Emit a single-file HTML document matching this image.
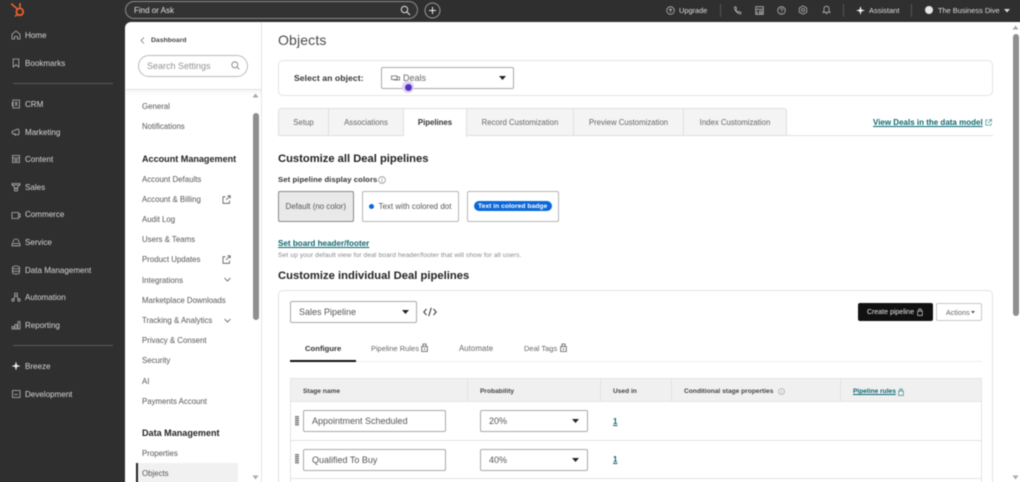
<!DOCTYPE html>
<html><head><meta charset="utf-8"><style>
html,body{margin:0;padding:0;width:1020px;height:482px;overflow:hidden;background:#fff}
body{position:relative;font-family:"Liberation Sans",sans-serif;color:#444}
#c{position:absolute;left:0;top:0;width:1020px;height:482px;overflow:hidden}
#p{position:absolute;left:0;top:0;width:1020px;height:482px;filter:blur(.4px)}
.a{position:absolute;box-sizing:border-box}
.t{position:absolute;white-space:nowrap;line-height:12px;margin-top:-6px;font-size:8.5px}
.n{color:#d6d6d6;font-size:8.05px;left:25px;margin-top:-5px}
.s{color:#555;font-size:7.85px;left:142px;margin-top:-5px}
.h{color:#222;font-weight:bold;font-size:9.07px;left:142px}
.b{font-weight:bold}
.l{color:#0b666c;font-weight:bold;text-decoration:underline}
.tab{position:absolute;top:108px;height:28px;background:#f4f4f4;border:1px solid #dfdfdf;border-left:0;box-sizing:border-box;text-align:center;line-height:28px;font-size:7.8px;color:#666;white-space:nowrap}
.box{position:absolute;box-sizing:border-box;background:#fff;border:1px solid #a9a9a9;border-radius:2px}
.ln{position:absolute;background:#e3e3e3}
svg{position:absolute;overflow:visible}
.i{fill:none;stroke:#b4b4b4}
.g{fill:none;stroke:#777;stroke-width:.8}
.th{font-size:6.6px;color:#444;top:392px}
</style></head><body><div id="c"><div id="p">

<div class="a" style="left:-20px;top:-20px;width:1060px;height:42px;background:#2f2f2f"></div>
<div class="a" style="left:-20px;top:-20px;width:145px;height:530px;background:#2f2f2f"></div>
<div class="a" style="left:125px;top:22px;width:20px;height:20px;background:#2f2f2f"></div>
<div class="a" style="left:125px;top:22px;width:137px;height:480px;background:#fff;border-top-left-radius:6px;border-right:1px solid #e4e4e4"></div>

<!-- logo -->
<svg style="left:10px;top:2px" width="16" height="16" viewBox="0 0 16 16"><circle cx="9.8" cy="9.8" r="3.4" fill="none" stroke="#e8622c" stroke-width="1.8"/><path d="M2 2.5L7.5 7M10 6V2.5M7.3 12.3L5 14.5" stroke="#e8622c" stroke-width="1.5" fill="none"/><circle cx="10" cy="2" r="1" fill="#e8622c"/><circle cx="2" cy="2.3" r="1" fill="#e8622c"/></svg>

<!-- search -->
<div class="a" style="left:125px;top:1px;width:293px;height:18px;border:1px solid #8b8b8b;border-radius:9px;background:#333"></div>
<span class="t" style="left:134px;top:10.6px;color:#e0e0e0;font-size:8px">Find or Ask</span>
<svg style="left:400px;top:5px" width="11" height="11" viewBox="0 0 11 11"><circle cx="4.5" cy="4.5" r="3.2" fill="none" stroke="#ddd" stroke-width="1"/><path d="M7 7L10 10" stroke="#ddd" stroke-width="1.1"/></svg>
<svg style="left:424px;top:2px" width="17" height="17" viewBox="0 0 17 17"><circle cx="8.5" cy="8.5" r="7.5" fill="none" stroke="#999"/><path d="M8.5 5v7M5 8.5h7" stroke="#eee" stroke-width="1"/></svg>

<!-- top right -->
<svg style="left:666px;top:6px" width="9" height="9" viewBox="0 0 9 9"><circle cx="4.5" cy="4.5" r="3.8" class="i" stroke-width=".8"/><path d="M4.5 6.5V3M3 4.3L4.5 2.8 6 4.3" class="i" stroke-width=".8"/></svg>
<span class="t" style="left:679px;top:10.5px;color:#ddd;font-size:7.4px">Upgrade</span>
<div class="a" style="left:720px;top:4px;width:1px;height:13px;background:#555"></div>
<svg style="left:733px;top:6px" width="9" height="9" viewBox="0 0 9 9"><path d="M1.5 1C1 3.5 4 7.5 7.5 8L8 6.5 6 5.5 5 6.2C4 5.7 3 4.5 2.8 3.5L3.6 2.7 2.9 .8Z" class="i" stroke-width=".8"/></svg>
<svg style="left:755px;top:6px" width="9" height="9" viewBox="0 0 9 9"><path d="M.7 .7h7.6v7.6H.7ZM.7 3.3h7.6M2 5v3.2M4.5 5.2h2.5v2h-2.5Z" class="i" stroke-width=".8"/></svg>
<svg style="left:777px;top:6px" width="9" height="9" viewBox="0 0 9 9"><circle cx="4.5" cy="4.5" r="3.8" class="i" stroke-width=".8"/><path d="M3.2 3.5C3.3 2.2 5.8 2.2 5.8 3.5 5.8 4.4 4.5 4.4 4.5 5.5M4.5 6.2v.8" class="i" stroke-width=".7"/></svg>
<svg style="left:798px;top:5px" width="10" height="10" viewBox="0 0 10 10"><path d="M5 .8L8.7 3v4.2L5 9.2 1.3 7.2V3Z" class="i" stroke-width=".8"/><circle cx="5" cy="5" r="1.5" class="i" stroke-width=".8"/></svg>
<svg style="left:822px;top:5px" width="9" height="10" viewBox="0 0 9 10"><path d="M1 7.3h7L7 6V3.5C7 .6 2 .6 2 3.5V6ZM3.5 8.6h2" class="i" stroke-width=".8"/></svg>
<div class="a" style="left:843px;top:4px;width:1px;height:13px;background:#555"></div>
<svg style="left:856px;top:6px" width="9" height="9" viewBox="0 0 9 9"><path d="M4.5 0L5.5 3.5 9 4.5 5.5 5.5 4.5 9 3.5 5.5 0 4.5 3.5 3.5Z" fill="#f2f2f2"/></svg>
<span class="t" style="left:869px;top:10.5px;color:#ddd;font-size:7.5px">Assistant</span>
<div class="a" style="left:911px;top:4px;width:1px;height:13px;background:#555"></div>
<div class="a" style="left:925px;top:6px;width:8px;height:8px;border-radius:50%;background:#e6e6e6"></div>
<span class="t" style="left:938px;top:10.5px;color:#ddd;font-size:7.4px">The Business Dive</span>
<svg style="left:1004px;top:9px" width="6" height="4"><path d="M0 0h6L3 3.5Z" fill="#ddd"/></svg>

<!-- sidebar -->
<svg style="left:11px;top:30px" width="10" height="10" viewBox="0 0 10 10"><path d="M1 9V4.3L5 1l4 3.3V9H6.5V6.5h-3V9Z" class="i" stroke-width=".8"/></svg>
<span class="t n" style="top:35px">Home</span>
<svg style="left:11px;top:58px" width="10" height="10" viewBox="0 0 10 10"><path d="M2.2 1h5.600v8L5 6.800 2.200 9Z" class="i" stroke-width=".8"/></svg>
<span class="t n" style="top:63px">Bookmarks</span>
<div class="a" style="left:13px;top:83px;width:100px;height:1px;background:#5a5a5a"></div>
<svg style="left:11px;top:99px" width="10" height="10" viewBox="0 0 10 10"><path d="M2 1h6.5v8H2ZM1.3 3v4" class="i" stroke-width=".8"/><circle cx="5.2" cy="4" r="1" class="i" stroke-width=".7"/><path d="M3.6 7c.5-1.400 2.700-1.400 3.200 0" class="i" stroke-width=".7"/></svg>
<span class="t n" style="top:104px">CRM</span>
<svg style="left:11px;top:127px" width="10" height="10" viewBox="0 0 10 10"><path d="M1 4.500L7 2c1.500 1 1.500 5 0 6L3.500 6.800H1.500ZM3.500 6.800L4.500 8.800" class="i" stroke-width=".8"/></svg>
<span class="t n" style="top:132px">Marketing</span>
<svg style="left:11px;top:154px" width="10" height="10" viewBox="0 0 10 10"><path d="M1.500 1.500h7v7h-7ZM1.500 4h7M3 5.500h4M3 7h4" class="i" stroke-width=".8"/></svg>
<span class="t n" style="top:159px">Content</span>
<svg style="left:11px;top:182px" width="10" height="10" viewBox="0 0 10 10"><path d="M1 1.500h8v1.500H1ZM1.800 3l1.700 3h3l1.700-3M3.500 6.500h3V8.800h-3Z" class="i" stroke-width=".8"/></svg>
<span class="t n" style="top:187px">Sales</span>
<svg style="left:11px;top:210px" width="10" height="10" viewBox="0 0 10 10"><path d="M1 2.500h6.500v6H1ZM7.500 4h1.700v3H7.500" class="i" stroke-width=".8"/></svg>
<span class="t n" style="top:214px">Commerce</span>
<svg style="left:11px;top:237px" width="10" height="10" viewBox="0 0 10 10"><path d="M2 5.500C2 1 8 1 8 5.500M1 6.500h8v2.300H1Z" class="i" stroke-width=".8"/></svg>
<span class="t n" style="top:242px">Service</span>
<svg style="left:11px;top:265px" width="10" height="10" viewBox="0 0 10 10"><ellipse cx="5" cy="2.500" rx="3.500" ry="1.500" class="i" stroke-width=".8"/><path d="M1.500 2.500v5c0 2 7 2 7 0v-5M1.500 5c0 2 7 2 7 0" class="i" stroke-width=".8"/></svg>
<span class="t n" style="top:270px">Data Management</span>
<svg style="left:11px;top:292px" width="10" height="10" viewBox="0 0 10 10"><circle cx="5" cy="2.500" r="1.500" class="i" stroke-width=".8"/><circle cx="2" cy="8" r="1.200" class="i" stroke-width=".8"/><circle cx="8" cy="8" r="1.200" class="i" stroke-width=".8"/><path d="M4.200 4L2.600 6.800M5.800 4L7.400 6.800" class="i" stroke-width=".8"/></svg>
<span class="t n" style="top:297px">Automation</span>
<svg style="left:11px;top:320px" width="10" height="10" viewBox="0 0 10 10"><path d="M1 6.500h2v2.500H1ZM4 4.500h2V9H4ZM7 1.500h2V9H7Z" class="i" stroke-width=".8"/></svg>
<span class="t n" style="top:325px">Reporting</span>
<div class="a" style="left:13px;top:345px;width:100px;height:1px;background:#5a5a5a"></div>
<svg style="left:11px;top:361px" width="10" height="10" viewBox="0 0 10 10"><path d="M5 .5L6 4 9.500 5 6 6 5 9.500 4 6 .5 5 4 4Z" fill="#f0f0f0"/></svg>
<span class="t n" style="top:366px">Breeze</span>
<svg style="left:11px;top:389px" width="10" height="10" viewBox="0 0 10 10"><path d="M1.500 1.500h7.500v7H1.500ZM3 5.500h4" class="i" stroke-width=".8"/></svg>
<span class="t n" style="top:394px">Development</span>

<!-- settings header -->
<svg style="left:140px;top:37px" width="5" height="7" viewBox="0 0 5 7"><path d="M4 .5L1 3.500 4 6.500" class="g"/></svg>
<span class="t b" style="left:151px;top:40.5px;font-size:6.8px;color:#444">Dashboard</span>
<div class="a" style="left:138px;top:55px;width:110px;height:22px;border:1px solid #bbb;border-radius:11px;background:#fff"></div>
<span class="t" style="left:147px;top:66px;font-size:9px;color:#929292">Search Settings</span>
<svg style="left:231px;top:61px" width="9" height="9" viewBox="0 0 9 9"><circle cx="3.800" cy="3.800" r="3" class="g"/><path d="M6 6L8.300 8.300" class="g"/></svg>
<div class="a" style="left:126px;top:89px;width:135px;height:1px;background:#e2e2e2"></div>
<div class="a" style="left:126px;top:90px;width:135px;height:6px;background:linear-gradient(#f7f7f7,#fff)"></div>

<svg style="left:252px;top:93px" width="7" height="5"><path d="M.5 4.500h6L3.500 .5Z" fill="#a8a8a8"/></svg>
<div class="a" style="left:253px;top:113px;width:6px;height:207px;border-radius:3px;background:#8f8f8f"></div>
<svg style="left:252px;top:475px" width="7" height="5"><path d="M.5 .5h6L3.500 4.500Z" fill="#a8a8a8"/></svg>

<span class="t s" style="top:106px">General</span>
<span class="t s" style="top:126px">Notifications</span>
<span class="t h" style="top:159px">Account Management</span>
<span class="t s" style="top:178.5px">Account Defaults</span>
<span class="t s" style="top:199px">Account &amp; Billing</span>
<svg style="left:222px;top:195px" width="9" height="9" viewBox="0 0 9 9"><path d="M3.500 1.800H1v6.500h6.500V5.500M4 5L8 1M5.500 .8H8.200V3.500" fill="none" stroke="#555" stroke-width=".8"/></svg>
<span class="t s" style="top:219px">Audit Log</span>
<span class="t s" style="top:239px">Users &amp; Teams</span>
<span class="t s" style="top:259px">Product Updates</span>
<svg style="left:222px;top:255px" width="9" height="9" viewBox="0 0 9 9"><path d="M3.500 1.800H1v6.500h6.500V5.500M4 5L8 1M5.500 .8H8.200V3.500" fill="none" stroke="#555" stroke-width=".8"/></svg>
<span class="t s" style="top:279.6px">Integrations</span>
<svg style="left:224px;top:277px" width="7" height="5" viewBox="0 0 7 5"><path d="M.5 1L3.500 4 6.500 1" fill="none" stroke="#555" stroke-width=".8"/></svg>
<span class="t s" style="top:300px">Marketplace Downloads</span>
<span class="t s" style="top:320px">Tracking &amp; Analytics</span>
<svg style="left:224px;top:317.5px" width="7" height="5" viewBox="0 0 7 5"><path d="M.5 1L3.500 4 6.500 1" fill="none" stroke="#555" stroke-width=".8"/></svg>
<span class="t s" style="top:340px">Privacy &amp; Consent</span>
<span class="t s" style="top:360px">Security</span>
<span class="t s" style="top:380.6px">AI</span>
<span class="t s" style="top:400.6px">Payments Account</span>
<span class="t h" style="top:433px">Data Management</span>
<span class="t s" style="top:453px">Properties</span>
<div class="a" style="left:137px;top:463px;width:101px;height:39px;background:#f1f1f1"></div>
<div class="a" style="left:136px;top:463px;width:1.5px;height:39px;background:#222"></div>
<span class="t s" style="top:473px">Objects</span>

<!-- main -->
<span class="t" style="left:278px;top:40px;font-size:14px;line-height:18px;margin-top:-9px;color:#4a4a4a;letter-spacing:.15px">Objects</span>
<div class="a" style="left:278px;top:60px;width:715px;height:36px;border:1px solid #e4e4e4;border-radius:5px"></div>
<span class="t b" style="left:294px;top:78px;font-size:8.6px;color:#333;letter-spacing:.08px">Select an object:</span>
<div class="box" style="left:381px;top:67px;width:133px;height:22px"></div>
<svg style="left:391px;top:75px" width="9" height="6" viewBox="0 0 9 6"><path d="M.5 1h5.500v3.500H.5ZM6 2h2.500v3H3v-.5" fill="none" stroke="#666" stroke-width=".8"/></svg>
<span class="t" style="left:403px;top:78px;font-size:9px;color:#666">Deals</span>
<svg style="left:499px;top:76px" width="7" height="4"><path d="M0 0h7L3.500 4Z" fill="#222"/></svg>
<div class="a" style="left:402px;top:81px;width:12px;height:12px;border-radius:50%;background:#dcd5f5"></div>
<div class="a" style="left:404.5px;top:83.5px;width:7px;height:7px;border-radius:50%;background:#5b2fc4"></div>

<div class="ln" style="left:278px;top:135px;width:715px;height:1px;background:#e0e0e0"></div>
<div class="tab" style="left:278px;width:51px;border-left:1px solid #dfdfdf;border-top-left-radius:3px">Setup</div>
<div class="tab" style="left:329px;width:75px">Associations</div>
<div class="tab" style="left:404px;width:63px;background:#fff;border-bottom:0;color:#333;font-weight:bold;height:29px">Pipelines</div>
<div class="tab" style="left:467px;width:107px">Record Customization</div>
<div class="tab" style="left:574px;width:110px">Preview Customization</div>
<div class="tab" style="left:684px;width:103px;border-top-right-radius:3px">Index Customization</div>
<span class="t l" style="left:873px;top:122.5px;font-size:8px">View Deals in the data model</span>
<svg style="left:985px;top:119px" width="7" height="7" viewBox="0 0 7 7"><path d="M3 1H.8v5.200H6V4M3 4L6.200 .8M4.300 .5h2.200v2.200" fill="none" stroke="#3b8a8f" stroke-width=".7"/></svg>

<span class="t b" style="left:278px;top:158.5px;font-size:11.2px;line-height:14px;margin-top:-7px;color:#222">Customize all Deal pipelines</span>
<span class="t b" style="left:278px;top:180px;font-size:7.7px;color:#333;letter-spacing:.09px">Set pipeline display colors</span>
<svg style="left:378px;top:176px" width="8" height="8" viewBox="0 0 8 8"><circle cx="4" cy="4" r="3.400" fill="none" stroke="#888" stroke-width=".7"/><path d="M4 3.300v2.700M4 2v.7" stroke="#888" stroke-width=".7"/></svg>

<div class="box" style="left:278px;top:191px;width:76px;height:31px;background:#e9e9e9;border-color:#8a8a8a"></div>
<span class="t" style="left:285.5px;top:206.8px;font-size:7.9px;color:#555">Default (no color)</span>
<div class="box" style="left:362px;top:191px;width:97px;height:31px;border-color:#b5b5b5"></div>
<div class="a" style="left:369px;top:203.5px;width:5px;height:5px;border-radius:50%;background:#0b68d8"></div>
<span class="t" style="left:378.5px;top:206.8px;font-size:7.9px;color:#555;letter-spacing:.05px">Text with colored dot</span>
<div class="box" style="left:467px;top:191px;width:92px;height:31px;border-color:#b5b5b5"></div>
<div class="a" style="left:474px;top:201px;width:78px;height:10px;border-radius:5px;background:#0b68d8"></div>
<span class="t b" style="left:478px;top:207px;font-size:6.7px;color:#fff;letter-spacing:.03px">Text in colored badge</span>

<span class="t l" style="left:278px;top:243.5px;font-size:8.1px">Set board header/footer</span>
<span class="t" style="left:278px;top:255.8px;font-size:6.7px;color:#888;letter-spacing:.09px">Set up your default view for deal board header/footer that will show for all users.</span>
<span class="t b" style="left:278px;top:275.5px;font-size:11.2px;line-height:14px;margin-top:-7px;color:#222;letter-spacing:.03px">Customize individual Deal pipelines</span>

<div class="a" style="left:278px;top:290px;width:715px;height:230px;border:1px solid #e2e2e2;border-radius:5px"></div>
<div class="box" style="left:290px;top:301px;width:127px;height:22px"></div>
<span class="t" style="left:299px;top:312px;font-size:9px;color:#555">Sales Pipeline</span>
<svg style="left:402px;top:310px" width="7" height="4"><path d="M0 0h7L3.500 4Z" fill="#222"/></svg>
<svg style="left:423px;top:307px" width="14" height="10" viewBox="0 0 14 10"><path d="M3.500 2L.8 5l2.700 3M10.500 2l2.700 3-2.700 3M8.300 .8L5.700 9.200" fill="none" stroke="#333" stroke-width="1"/></svg>

<div class="a" style="left:858px;top:303px;width:75px;height:18px;border-radius:2px;background:#111"></div>
<span class="t" style="left:867px;top:313px;font-size:7px;color:#e8e8e8">Create pipeline</span>
<svg style="left:917px;top:308px" width="6" height="8" viewBox="0 0 6 8"><path d="M.7 3h4.600v4.500H.7ZM1.800 3V1h2.400v2" fill="none" stroke="#ccc" stroke-width=".7"/></svg>
<div class="a" style="left:936px;top:303px;width:46px;height:18px;border:1px solid #c8c8c8;border-radius:2px"></div>
<span class="t" style="left:946px;top:313px;font-size:7.2px;color:#666">Actions</span>
<svg style="left:971px;top:311px" width="4" height="3"><path d="M0 0h4L2 2.500Z" fill="#555"/></svg>

<span class="t b" style="left:305px;top:348.5px;font-size:7.7px;color:#333">Configure</span>
<span class="t" style="left:371px;top:348.5px;font-size:7.5px;color:#666">Pipeline Rules</span>
<svg style="left:421px;top:343px" width="7" height="9" viewBox="0 0 7 9"><path d="M.7 3.500h5.600v5H.7ZM2 3.500V1h3v2.500M3.500 5v2" fill="none" stroke="#555" stroke-width=".8"/></svg>
<span class="t" style="left:459px;top:348.5px;font-size:7.8px;color:#666;letter-spacing:.1px">Automate</span>
<span class="t" style="left:524px;top:348.5px;font-size:7.5px;color:#666">Deal Tags</span>
<svg style="left:560px;top:343px" width="7" height="9" viewBox="0 0 7 9"><path d="M.7 3.500h5.600v5H.7ZM2 3.500V1h3v2.500M3.500 5v2" fill="none" stroke="#555" stroke-width=".8"/></svg>
<div class="ln" style="left:290px;top:361px;width:692px;height:1px;background:#ececec"></div>
<div class="a" style="left:290px;top:360px;width:66px;height:2px;background:#111"></div>

<div class="a" style="left:290px;top:378px;width:692px;height:24px;background:#f0f0f0;border:1px solid #e4e4e4"></div>
<div class="ln" style="left:467px;top:378px;width:1px;height:24px"></div>
<div class="ln" style="left:600px;top:378px;width:1px;height:24px"></div>
<div class="ln" style="left:671px;top:378px;width:1px;height:24px"></div>
<div class="ln" style="left:840px;top:378px;width:1px;height:24px"></div>
<div class="ln" style="left:290px;top:402px;width:1px;height:100px"></div>
<div class="ln" style="left:981px;top:402px;width:1px;height:100px"></div>
<div class="ln" style="left:290px;top:440px;width:692px;height:1px"></div>
<div class="ln" style="left:290px;top:478px;width:692px;height:1px"></div>
<span class="t b th" style="left:303px">Stage name</span>
<span class="t b th" style="left:480px">Probability</span>
<span class="t b th" style="left:613px">Used in</span>
<span class="t b th" style="left:684px">Conditional stage properties</span>
<svg style="left:778px;top:387.5px" width="7" height="7" viewBox="0 0 7 7"><circle cx="3.500" cy="3.500" r="3" fill="none" stroke="#999" stroke-width=".6"/><path d="M3.500 3v2M3.500 1.700v.6" stroke="#999" stroke-width=".6"/></svg>
<span class="t l th" style="left:853px;color:#0b666c">Pipeline rules</span>
<svg style="left:898px;top:387.5px" width="6" height="8" viewBox="0 0 6 8"><path d="M.7 3h4.600v4.500H.7ZM1.800 3V1h2.400v2" fill="none" stroke="#3b8a8f" stroke-width=".7"/></svg>

<div class="a" style="left:295px;top:416px;width:3.500px;height:10px;background:repeating-linear-gradient(#777 0,#777 1px,#ccc 1px,#ccc 2px)"></div>
<div class="box" style="left:303px;top:410px;width:143px;height:22px"></div>
<span class="t" style="left:312px;top:421px;font-size:9px;color:#555">Appointment Scheduled</span>
<div class="box" style="left:480px;top:410px;width:108px;height:22px"></div>
<span class="t" style="left:489px;top:421px;font-size:9px;color:#555">20%</span>
<svg style="left:572px;top:419px" width="7" height="4"><path d="M0 0h7L3.500 4Z" fill="#222"/></svg>
<span class="t l" style="left:613px;top:421.5px;font-size:8px">1</span>

<div class="a" style="left:295px;top:454px;width:3.500px;height:10px;background:repeating-linear-gradient(#777 0,#777 1px,#ccc 1px,#ccc 2px)"></div>
<div class="box" style="left:303px;top:449px;width:143px;height:22px"></div>
<span class="t" style="left:312px;top:460px;font-size:9px;color:#555">Qualified To Buy</span>
<div class="box" style="left:480px;top:449px;width:108px;height:22px"></div>
<span class="t" style="left:489px;top:460px;font-size:9px;color:#555">40%</span>
<svg style="left:572px;top:458px" width="7" height="4"><path d="M0 0h7L3.500 4Z" fill="#222"/></svg>
<span class="t l" style="left:613px;top:460px;font-size:8px">1</span>

<!-- main scrollbar -->
<svg style="left:1012px;top:25px" width="7" height="5"><path d="M.5 4.500h6L3.500 .5Z" fill="#a8a8a8"/></svg>
<div class="a" style="left:1013px;top:34px;width:6px;height:282px;border-radius:3px;background:#8f8f8f"></div>
<svg style="left:1012px;top:475px" width="7" height="5"><path d="M.5 .5h6L3.500 4.500Z" fill="#a8a8a8"/></svg>
</div></div></body></html>
